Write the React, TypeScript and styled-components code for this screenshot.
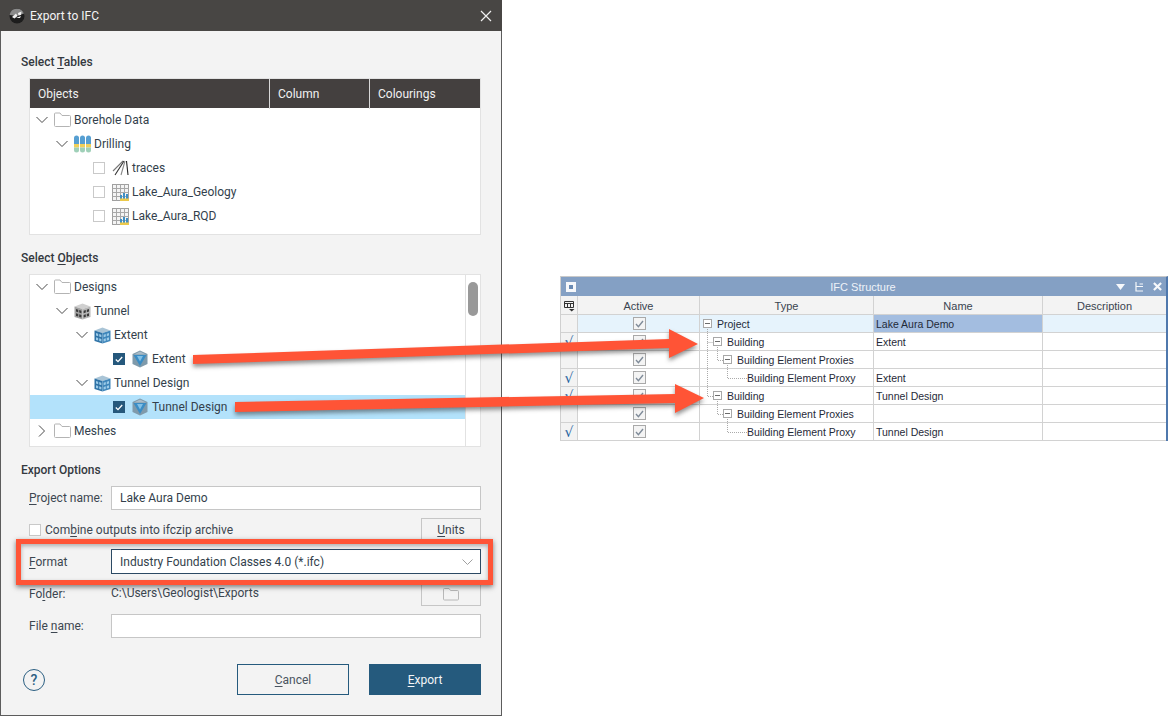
import React from 'react';
import styled, { createGlobalStyle } from 'styled-components';

const GlobalStyle = createGlobalStyle`
  html, body {
    margin: 0;
    padding: 0;
    background: #fff;
  }
  * {
    box-sizing: border-box;
  }
`;

const Page = styled.div`
  position: relative;
  width: 1169px;
  height: 716px;
  display: flex;
  overflow: hidden;
  background: #fff;
  font-family: Roboto, 'Liberation Sans', sans-serif;
  font-size: 12px;
  color: #333f4c;
`;

/* ---------- dialog ---------- */

const Dialog = styled.div`
  width: 502px;
  height: 716px;
  flex-shrink: 0;
  display: flex;
  flex-direction: column;
  background: #f3f3f3;
  border: 1px solid #5c5c5c;
  border-top: 0;
`;

const TitleBar = styled.div`
  height: 31px;
  margin: 0 -1px;
  padding: 0 10px 0 9px;
  display: flex;
  align-items: center;
  background: #484644;
  color: #f4f4f4;
  font-size: 12px;
`;

const TitleText = styled.span`
  margin-left: 5px;
  flex: 1;
`;

const Body = styled.div`
  flex: 1;
  padding: 0 20px 0 20px;
  display: flex;
  flex-direction: column;
`;

const SectionTitle = styled.div<{ $top: number }>`
  height: 16px;
  line-height: 16px;
  margin-top: ${(p) => p.$top}px;
  font-weight: 500;
  color: #34393f;
`;

const Mnemonic = styled.span`
  text-decoration: underline;
  text-underline-offset: 2px;
  text-decoration-thickness: 1px;
`;

const TreeBox = styled.div<{ $height: number }>`
  position: relative;
  height: ${(p) => p.$height}px;
  margin: 8px 0 0 8px;
  background: #fff;
  border: 1px solid #e2e2e2;
  display: flex;
  flex-direction: column;
  overflow: hidden;
`;

const HeaderRow = styled.div`
  height: 29px;
  flex-shrink: 0;
  display: grid;
  grid-template-columns: 240px 100px 1fr;
  background: #44403f;
  color: #f1f1f1;
`;

const HeaderCell = styled.div`
  padding-left: 8px;
  line-height: 30px;
  border-right: 1px solid #d8d8d8;
  &:last-child {
    border-right: 0;
  }
`;

const TreeList = styled.div`
  flex: 1;
  display: flex;
  flex-direction: column;
`;

const ObjectsLayout = styled.div`
  flex: 1;
  display: flex;
  min-height: 0;
`;

const Row = styled.div<{ $level: number; $selected?: boolean }>`
  height: 24px;
  padding-left: ${(p) => 6 + p.$level * 20}px;
  display: flex;
  align-items: center;
  background: ${(p) => (p.$selected ? '#b3e2fb' : 'transparent')};
  white-space: nowrap;
`;

const Expander = styled.span`
  width: 18px;
  flex-shrink: 0;
  display: flex;
  align-items: center;
`;

const IconSlot = styled.span`
  width: 20px;
  height: 20px;
  flex-shrink: 0;
  display: flex;
  align-items: center;
`;

const Tick = styled.span<{ $checked?: boolean }>`
  width: 12px;
  height: 12px;
  margin: 0 7px 0 17px;
  flex-shrink: 0;
  display: flex;
  align-items: center;
  justify-content: center;
  background: ${(p) => (p.$checked ? '#25587c' : '#fff')};
  border: 1px solid ${(p) => (p.$checked ? '#25587c' : '#c9c9c9')};
`;

const ScrollTrack = styled.div`
  width: 15px;
  flex-shrink: 0;
  margin-left: auto;
  padding: 7px 2px 0 2px;
  border-left: 1px solid #e2e2e2;
`;

const ScrollThumb = styled.div`
  width: 10px;
  height: 34px;
  border-radius: 5px;
  background: #999;
`;

const Form = styled.div`
  margin-top: 8px;
  padding-left: 8px;
  display: grid;
  grid-template-columns: 82px 1fr 60px;
  grid-auto-rows: 24px;
  row-gap: 8px;
  align-items: center;
`;

const FieldLabel = styled.label`
  color: #3c4650;
`;

const TextField = styled.div<{ $wide?: boolean }>`
  grid-column: ${(p) => (p.$wide ? '2 / 4' : 'auto')};
  height: 24px;
  padding-left: 8px;
  line-height: 22px;
  background: #fff;
  border: 1px solid #c6c6c6;
`;

const SelectField = styled.div`
  grid-column: 2 / 4;
  height: 25px;
  margin-top: -1px;
  padding: 0 7px 0 8px;
  display: flex;
  align-items: center;
  justify-content: space-between;
  background: #fff;
  border: 1px solid #2c4a64;
`;

const CheckLabel = styled.div`
  grid-column: 1 / 3;
  display: flex;
  align-items: center;
  color: #3c4650;
`;

const PlainTick = styled.span`
  width: 12px;
  height: 12px;
  margin-right: 4px;
  background: #fff;
  border: 1px solid #c9c9c9;
`;

const PathText = styled.div`
  color: #3c4650;
  margin-top: -2px;
`;

const SideButton = styled.div`
  height: 24px;
  display: flex;
  align-items: center;
  justify-content: center;
  border: 1px solid #c6c6c6;
  color: #3c4650;
`;

const Footer = styled.div`
  margin: 26px 0 0 2px;
  height: 31px;
  display: flex;
  align-items: center;
  gap: 20px;
`;

const HelpButton = styled.div`
  width: 22px;
  height: 22px;
  margin-right: auto;
  border-radius: 50%;
  border: 1.5px solid #2b5f82;
  color: #2b5f82;
  display: flex;
  align-items: center;
  justify-content: center;
  font-size: 14px;
  font-weight: 500;
`;

const ActionButton = styled.div<{ $primary?: boolean }>`
  width: 112px;
  height: 31px;
  display: flex;
  align-items: center;
  justify-content: center;
  background: ${(p) => (p.$primary ? '#255a7d' : 'transparent')};
  border: 1px solid #255a7d;
  color: ${(p) => (p.$primary ? '#f4f6f8' : '#4a5560')};
`;

/* ---------- IFC structure window ---------- */

const Workspace = styled.div`
  flex: 1;
  padding: 276px 0 0 58px;
`;

const IfcPanel = styled.div`
  position: relative;
  width: 608px;
  height: 165px;
  background: #fff;
  border-top: 1px solid #c9c9c9;
  border-left: 1px solid #d0d0d0;
  border-right: 2px solid #4f78ad;
  font-family: 'Liberation Sans', Arial, sans-serif;
  font-size: 11px;
  color: #1f2a38;
`;

const PanelTitle = styled.div`
  height: 19px;
  padding: 0 4px 0 5px;
  display: flex;
  align-items: center;
  background: #84a0c4;
  color: #eef2f8;
`;

const PanelBadge = styled.span`
  width: 10px;
  height: 10px;
  flex-shrink: 0;
  display: flex;
  align-items: center;
  justify-content: center;
  background: #f6f8fb;
  &::after {
    content: '';
    width: 4px;
    height: 4px;
    background: #6a8ab3;
  }
`;

const PanelName = styled.span`
  flex: 1;
  text-align: center;
  padding-left: 34px;
`;

const PanelTools = styled.span`
  display: flex;
  align-items: center;
  gap: 10px;
`;

const GridRow = styled.div<{ $header?: boolean }>`
  height: ${(p) => (p.$header ? 19 : 18)}px;
  display: grid;
  grid-template-columns: 17px 122px 174px 169px 1fr;
  background: ${(p) => (p.$header ? '#f3f3f3' : 'transparent')};
  border-bottom: 1px solid #d2d2d2;
`;

const GridCell = styled.div<{ $tone?: 'current' | 'focus' | 'head'; $center?: boolean }>`
  padding-left: 2px;
  display: flex;
  align-items: center;
  justify-content: ${(p) => (p.$center ? 'center' : 'flex-start')};
  white-space: nowrap;
  font-size: 10.5px;
  border-right: 1px solid #d2d2d2;
  background: ${(p) =>
    p.$tone === 'focus'
      ? '#a3bde0'
      : p.$tone === 'current'
      ? '#e6f3fc'
      : p.$tone === 'head'
      ? '#f3f3f3'
      : 'transparent'};
  &:last-child {
    border-right: 0;
  }
`;

const HeadCell = styled(GridCell)`
  justify-content: center;
  padding: 2px 0 0 0;
  font-size: 11px;
  color: #3a4450;
`;

const MarkCell = styled(GridCell)`
  justify-content: center;
  padding: 0;
  color: #1d5f9e;
  font-family: 'DejaVu Sans', sans-serif;
  font-size: 14px;
`;

const GridCheck = styled.span`
  width: 13px;
  height: 13px;
  display: flex;
  align-items: center;
  justify-content: center;
  background: #f4f4f4;
  border: 1px solid #a9a9a9;
`;

const TypeCell = styled(GridCell)<{ $depth: number; $leaf?: boolean }>`
  padding-left: ${(p) => 3 + p.$depth * 10 + (p.$leaf ? 14 : 0)}px;
`;

const MinusBox = styled.span`
  width: 9px;
  height: 9px;
  margin: 0 5px 0 0;
  flex-shrink: 0;
  display: flex;
  align-items: center;
  justify-content: center;
  background: #fff;
  border: 1px solid #a8a8a8;
  position: relative;
  z-index: 1;
  &::after {
    content: '';
    width: 5px;
    height: 1px;
    background: #6c6c6c;
  }
`;

const GuideLines = styled.svg`
  position: absolute;
  left: 0;
  top: 0;
  pointer-events: none;
`;

/* ---------- annotations ---------- */

const ArrowLayer = styled.svg`
  position: absolute;
  left: 0;
  top: 0;
  pointer-events: none;
  filter: drop-shadow(0 3px 2px rgba(40, 40, 40, 0.5));
`;

const HighlightFrame = styled.div`
  position: absolute;
  left: 16px;
  top: 539px;
  width: 477px;
  height: 46px;
  border: 5px solid #ff5436;
  box-shadow: 0 2px 5px rgba(40, 40, 40, 0.6), inset 0 2px 4px rgba(40, 40, 40, 0.35);
  pointer-events: none;
`;

/* ---------- icons ---------- */

const Chevron = ({ open = true }: { open?: boolean }) => (
  <svg width="12" height="12" viewBox="0 0 12 12" fill="none" stroke="#4a4a4a" strokeWidth="1">
    {open ? <path d="M0.5 3 L6 8.5 L11.5 3" /> : <path d="M3 0.5 L8.5 6 L3 11.5" />}
  </svg>
);

const FolderIcon = () => (
  <svg width="18" height="16" viewBox="0 0 18 16" fill="#fff" stroke="#b4b4b4" strokeWidth="1">
    <path d="M1.5 14.5 Q0.5 14.5 0.5 13.5 V2 Q0.5 1 1.5 1 H6 L8 3.5 H15.5 Q16.5 3.5 16.5 4.5 V13.5 Q16.5 14.5 15.5 14.5 Z" />
  </svg>
);

const DrillingIcon = () => (
  <svg width="17" height="18" viewBox="0 0 17 18">
    {[0, 6, 12].map((x) => (
      <g key={x}>
        <path d={`M${x} 3 Q${x} 0.5 ${x + 2.5} 0.5 Q${x + 5} 0.5 ${x + 5} 3 V9 H${x} Z`} fill="#569fd2" />
        <rect x={x} y="9" width="5" height="3.5" fill="#f0d05a" />
        <path d={`M${x} 12.5 H${x + 5} V15 Q${x + 5} 17.5 ${x + 2.5} 17.5 Q${x} 17.5 ${x} 15 Z`} fill="#9fd0b8" />
      </g>
    ))}
  </svg>
);

const TracesIcon = () => (
  <svg width="18" height="16" viewBox="0 0 18 16" fill="none" stroke="#555" strokeWidth="1.1">
    <path d="M11 1 L1 11" stroke="#777" />
    <path d="M12 1 L3 15" stroke="#333" />
    <path d="M13 1 L9 15" stroke="#888" />
    <path d="M14.5 1 L16 15" stroke="#222" />
  </svg>
);

const TableIcon = () => (
  <svg width="17" height="17" viewBox="0 0 17 17">
    <rect x="0.5" y="0.5" width="16" height="16" fill="#f4f4f4" stroke="#a0a0a0" />
    <path d="M0.5 4.5 H16.5 M0.5 8.5 H16.5 M0.5 12.5 H16.5 M4.5 0.5 V16.5 M8.5 0.5 V16.5 M12.5 0.5 V16.5" stroke="#a8a8a8" />
    <rect x="8" y="11" width="2" height="4" fill="#3f8fc4" />
    <rect x="11" y="9" width="2" height="6" fill="#3f8fc4" />
    <rect x="14" y="10" width="2" height="5" fill="#3f8fc4" />
    <rect x="8" y="14.5" width="9" height="2.5" fill="#ecc94a" />
  </svg>
);

const BlockIcon = ({ tint }: { tint: 'grey' | 'blue' }) => {
  const left = tint === 'grey' ? '#a2a2a2' : '#2e72a6';
  const right = tint === 'grey' ? '#b6b6b6' : '#3f86ba';
  const top = tint === 'grey' ? '#d0d0d0' : '#a9c4d6';
  const cell = tint === 'grey' ? '#3a3a3a' : '#9ccbe8';
  return (
    <svg width="17" height="17" viewBox="0 0 17 17">
      <path d="M8.5 0.5 L16.5 3.5 L8.5 6 L0.5 3.5 Z" fill={top} />
      <path d="M0.5 3.5 L8.5 6 V16.5 L0.5 14 Z" fill={left} />
      <path d="M16.5 3.5 L8.5 6 V16.5 L16.5 14 Z" fill={right} />
      <path
        d="M2 6 l2.2 .7 v2.6 l-2.2 -.7 Z M5.2 7 l2.2 .7 v2.6 l-2.2 -.7 Z M2 10.3 l2.2 .7 v2.6 l-2.2 -.7 Z M5.2 11.3 l2.2 .7 v2.6 l-2.2 -.7 Z M9.6 7.7 l2.2 -.7 v2.6 l-2.2 .7 Z M12.8 6.7 l2.2 -.7 v2.6 l-2.2 .7 Z M9.6 12 l2.2 -.7 v2.6 l-2.2 .7 Z M12.8 11 l2.2 -.7 v2.6 l-2.2 .7 Z"
        fill={cell}
      />
    </svg>
  );
};

const ShellIcon = () => (
  <svg width="16" height="18" viewBox="0 0 16 18">
    <path d="M8 0.5 L15.5 4 V14 L8 17.5 L0.5 14 V4 Z" fill="#7f9aab" />
    <path d="M8 1.5 L14 4.5 H2 Z" fill="#a9bcc8" />
    <path d="M1.5 5 H14.5 L8 16 Z" fill="#3a8dc5" />
    <path d="M5 6 H11 L8 11.5 Z" fill="#82c0e6" />
  </svg>
);

const AppIcon = () => (
  <svg width="16" height="16" viewBox="0 0 16 16">
    <circle cx="8" cy="8" r="7.5" fill="#1d1d1d" />
    <path d="M0.6 7 A7.5 7.5 0 0 1 15 5.5 L8 8 Z" fill="#8a8a8a" />
    <path d="M3 9 L7 5.5 L8.5 8 L5.5 10.5 Z M9 5 L12.5 3.5 L12 7 L9.5 7.5 Z M7 10 L12 8 L11 10 Z" fill="#f2f2f2" />
  </svg>
);

const CloseIcon = () => (
  <svg width="12" height="12" viewBox="0 0 12 12" stroke="#f0f0f0" strokeWidth="1.2">
    <path d="M1 1 L11 11 M11 1 L1 11" />
  </svg>
);

const WhiteCheck = () => (
  <svg width="8" height="7" viewBox="0 0 8 7" fill="none" stroke="#fff" strokeWidth="1.3">
    <path d="M0.8 3.5 L3 5.6 L7.2 1" />
  </svg>
);

const GreyCheck = () => (
  <svg width="9" height="8" viewBox="0 0 9 8" fill="none" stroke="#7f8b99" strokeWidth="1.4">
    <path d="M1 4 L3.4 6.6 L8 1" />
  </svg>
);

const SmallFolder = () => (
  <svg width="16" height="13" viewBox="0 0 16 13" fill="none" stroke="#b8b8b8" strokeWidth="1">
    <path d="M1.5 12 Q0.5 12 0.5 11 V1.5 Q0.5 0.5 1.5 0.5 H6 L7.5 2.5 H14.5 Q15.5 2.5 15.5 3.5 V11 Q15.5 12 14.5 12 Z" />
  </svg>
);

const SelectChevron = () => (
  <svg width="11" height="6" viewBox="0 0 11 6" fill="none" stroke="#a0a0a0" strokeWidth="1">
    <path d="M0.5 0.5 L5.5 5.5 L10.5 0.5" />
  </svg>
);

const ColumnsIcon = () => (
  <svg width="11" height="12" viewBox="0 0 11 12" fill="none" stroke="#333" strokeWidth="1">
    <path d="M0.5 1.5 H9.5 V7.5 H0.5 Z M0.5 3.5 H9.5 M3.5 3.5 V7.5 M6.5 3.5 V7.5" />
    <path d="M5 9 H10.5 L7.7 11.5 Z" fill="#333" stroke="none" />
  </svg>
);

const PanelToolIcons = () => (
  <PanelTools>
    <svg width="9" height="6" viewBox="0 0 9 6" fill="#f6f8fb">
      <path d="M0 0 H9 L4.5 6 Z" />
    </svg>
    <svg width="8" height="10" viewBox="0 0 8 10" fill="none" stroke="#f6f8fb" strokeWidth="1.2">
      <path d="M1 0 V9 H8 M1 4.5 H8 M4.5 2 H8" />
    </svg>
    <svg width="9" height="9" viewBox="0 0 10 10" stroke="#f6f8fb" strokeWidth="2.4">
      <path d="M1 1 L9 9 M9 1 L1 9" />
    </svg>
  </PanelTools>
);

/* ---------- data ---------- */

const ifcRows = [
  { depth: 0, type: 'Project', name: 'Lake Aura Demo', mark: false, box: true },
  { depth: 1, type: 'Building', name: 'Extent', mark: true, box: true },
  { depth: 2, type: 'Building Element Proxies', name: '', mark: false, box: true },
  { depth: 3, type: 'Building Element Proxy', name: 'Extent', mark: true, box: false },
  { depth: 1, type: 'Building', name: 'Tunnel Design', mark: true, box: true },
  { depth: 2, type: 'Building Element Proxies', name: '', mark: false, box: true },
  { depth: 3, type: 'Building Element Proxy', name: 'Tunnel Design', mark: true, box: false },
];

const App = () => {
  return (
    <Page>
      <GlobalStyle />
      <Dialog>
        <TitleBar>
          <AppIcon />
          <TitleText>Export to IFC</TitleText>
          <CloseIcon />
        </TitleBar>
        <Body>
          <SectionTitle $top={23}>
            Select <Mnemonic>T</Mnemonic>ables
          </SectionTitle>
          <TreeBox $height={157}>
            <HeaderRow>
              <HeaderCell>Objects</HeaderCell>
              <HeaderCell>Column</HeaderCell>
              <HeaderCell>Colourings</HeaderCell>
            </HeaderRow>
            <TreeList>
              <Row $level={0}>
                <Expander><Chevron /></Expander>
                <IconSlot><FolderIcon /></IconSlot>
                Borehole Data
              </Row>
              <Row $level={1}>
                <Expander><Chevron /></Expander>
                <IconSlot><DrillingIcon /></IconSlot>
                Drilling
              </Row>
              <Row $level={2}>
                <Tick />
                <IconSlot><TracesIcon /></IconSlot>
                traces
              </Row>
              <Row $level={2}>
                <Tick />
                <IconSlot><TableIcon /></IconSlot>
                Lake_Aura_Geology
              </Row>
              <Row $level={2}>
                <Tick />
                <IconSlot><TableIcon /></IconSlot>
                Lake_Aura_RQD
              </Row>
            </TreeList>
          </TreeBox>

          <SectionTitle $top={15}>
            Select <Mnemonic>O</Mnemonic>bjects
          </SectionTitle>
          <TreeBox $height={173}>
            <ObjectsLayout>
              <TreeList>
                <Row $level={0}>
                  <Expander><Chevron /></Expander>
                  <IconSlot><FolderIcon /></IconSlot>
                  Designs
                </Row>
                <Row $level={1}>
                  <Expander><Chevron /></Expander>
                  <IconSlot><BlockIcon tint="grey" /></IconSlot>
                  Tunnel
                </Row>
                <Row $level={2}>
                  <Expander><Chevron /></Expander>
                  <IconSlot><BlockIcon tint="blue" /></IconSlot>
                  Extent
                </Row>
                <Row $level={3}>
                  <Tick $checked><WhiteCheck /></Tick>
                  <IconSlot><ShellIcon /></IconSlot>
                  Extent
                </Row>
                <Row $level={2}>
                  <Expander><Chevron /></Expander>
                  <IconSlot><BlockIcon tint="blue" /></IconSlot>
                  Tunnel Design
                </Row>
                <Row $level={3} $selected>
                  <Tick $checked><WhiteCheck /></Tick>
                  <IconSlot><ShellIcon /></IconSlot>
                  Tunnel Design
                </Row>
                <Row $level={0}>
                  <Expander><Chevron open={false} /></Expander>
                  <IconSlot><FolderIcon /></IconSlot>
                  Meshes
                </Row>
              </TreeList>
              <ScrollTrack>
                <ScrollThumb />
              </ScrollTrack>
            </ObjectsLayout>
          </TreeBox>

          <SectionTitle $top={15}>Export Options</SectionTitle>
          <Form>
            <FieldLabel>
              <Mnemonic>P</Mnemonic>roject name:
            </FieldLabel>
            <TextField $wide>Lake Aura Demo</TextField>

            <CheckLabel>
              <PlainTick />
              Com<Mnemonic>b</Mnemonic>ine outputs into ifczip archive
            </CheckLabel>
            <SideButton>
              <span>
                <Mnemonic>U</Mnemonic>nits
              </span>
            </SideButton>

            <FieldLabel>
              <Mnemonic>F</Mnemonic>ormat
            </FieldLabel>
            <SelectField>
              Industry Foundation Classes 4.0 (*.ifc)
              <SelectChevron />
            </SelectField>

            <FieldLabel>
              Fo<Mnemonic>l</Mnemonic>der:
            </FieldLabel>
            <PathText>C:\Users\Geologist\Exports</PathText>
            <SideButton>
              <SmallFolder />
            </SideButton>

            <FieldLabel>
              File <Mnemonic>n</Mnemonic>ame:
            </FieldLabel>
            <TextField $wide />
          </Form>
          <Footer>
            <HelpButton>?</HelpButton>
            <ActionButton>
              <span>
                <Mnemonic>C</Mnemonic>ancel
              </span>
            </ActionButton>
            <ActionButton $primary>
              <span>
                <Mnemonic>E</Mnemonic>xport
              </span>
            </ActionButton>
          </Footer>
        </Body>
      </Dialog>

      <Workspace>
        <IfcPanel>
          <PanelTitle>
            <PanelBadge />
            <PanelName>IFC Structure</PanelName>
            <PanelToolIcons />
          </PanelTitle>
          <GridRow $header>
            <HeadCell $tone="head"><ColumnsIcon /></HeadCell>
            <HeadCell>Active</HeadCell>
            <HeadCell>Type</HeadCell>
            <HeadCell>Name</HeadCell>
            <HeadCell>Description</HeadCell>
          </GridRow>
          {ifcRows.map((row, index) => {
            const current = index === 0 ? 'current' : undefined;
            return (
              <GridRow key={index}>
                <MarkCell $tone="head">{row.mark ? '√' : ''}</MarkCell>
                <GridCell $center $tone={current}>
                  <GridCheck><GreyCheck /></GridCheck>
                </GridCell>
                <TypeCell $depth={row.depth} $leaf={!row.box} $tone={current}>
                  {row.box && <MinusBox />}
                  {row.type}
                </TypeCell>
                <GridCell $tone={index === 0 ? 'focus' : undefined}>{row.name}</GridCell>
                <GridCell $tone={current} />
              </GridRow>
            );
          })}
          <GuideLines width="320" height="165" fill="none" stroke="#aaa" strokeDasharray="1 1">
            <path d="M146.5 52 V119.5 H152" />
            <path d="M146.5 65.5 H152" />
            <path d="M156.5 70 V83.5 H162 M156.5 124 V137.5 H162" />
            <path d="M166.5 88 V101.5 H186 M166.5 142 V155.5 H186" />
          </GuideLines>
        </IfcPanel>
      </Workspace>

      <HighlightFrame />
      <ArrowLayer width="1169" height="716">
        <path
          d="M193 355 L669 339 L669 329 L698 344 L669 358 L669 348 L193 364 Z"
          fill="#ff5436"
        />
        <path
          d="M235 402 L675 394 L675 384 L704 398 L675 413 L675 403 L235 412 Z"
          fill="#ff5436"
        />
      </ArrowLayer>
    </Page>
  );
};

export default App;
